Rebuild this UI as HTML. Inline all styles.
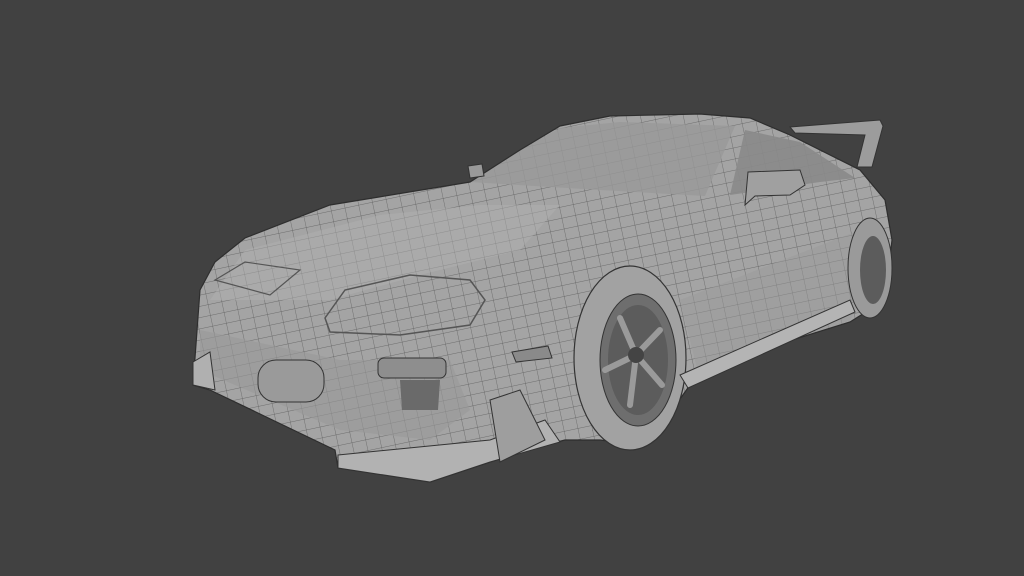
<!DOCTYPE html>
<html><head><style>
html,body{margin:0;padding:0;background:#414141;width:1024px;height:576px;overflow:hidden}
svg{display:block}
</style></head><body>
<svg width="1024" height="576" viewBox="0 0 1024 576" xmlns="http://www.w3.org/2000/svg">
<defs>
<pattern id="g" width="14" height="11" patternUnits="userSpaceOnUse" patternTransform="rotate(-12)">
<path d="M0 0H14M0 0V11" stroke="#5a5a5a" stroke-width="0.7" fill="none"/>
</pattern>
<clipPath id="body"><path d="M193 385 L200 290 L215 262 L245 238 L330 205 L470 182 L520 150 L560 126 L610 116 L700 114 L750 118 L790 135 L860 170 L885 200 L892 240 L885 300 L850 322 L760 350 L690 385 L665 420 L640 445 L600 440 L565 440 L545 445 L490 462 L430 482 L338 468 L335 450 L210 390 Z"/></clipPath>
</defs>
<rect width="1024" height="576" fill="#414141"/>
<path d="M790 127 L880 120 L883 126 L872 167 L857 167 L865 135 L795 133 Z" fill="#9c9c9c" stroke="#333" stroke-width="1"/>
<path d="M193 385 L200 290 L215 262 L245 238 L330 205 L470 182 L520 150 L560 126 L610 116 L700 114 L750 118 L790 135 L860 170 L885 200 L892 240 L885 300 L850 322 L760 350 L690 385 L665 420 L640 445 L600 440 L565 440 L545 445 L490 462 L430 482 L338 468 L335 450 L210 390 Z" fill="#a4a4a4"/>
<g clip-path="url(#body)">
<rect width="1024" height="576" fill="url(#g)"/>
<path d="M470 182 L520 150 L560 128 L620 122 L735 126 L705 196 L600 190 Z" fill="#989898" opacity="0.8"/>
<path d="M730 195 L745 130 L800 142 L855 178 L820 182 Z" fill="#8a8a8a" opacity="0.9"/>
<path d="M210 300 L245 250 L380 215 L480 205 L560 205 L520 250 L420 275 L330 300 Z" fill="#b0b0b0" opacity="0.5"/>
<path d="M200 330 L340 360 L450 360 L470 410 L430 440 L340 430 L200 370 Z" fill="#9a9a9a" opacity="0.6"/>
<path d="M680 300 L860 230 L880 260 L850 320 L700 380 Z" fill="#9a9a9a" opacity="0.5"/>
</g>
<path d="M193 385 L200 290 L215 262 L245 238 L330 205 L470 182 L520 150 L560 126 L610 116 L700 114 L750 118 L790 135 L860 170 L885 200 L892 240 L885 300 L850 322 L760 350 L690 385 L665 420 L640 445 L600 440 L565 440 L545 445 L490 462 L430 482 L338 468 L335 450 L210 390 Z" fill="none" stroke="#2e2e2e" stroke-width="1.2"/>
<path d="M325 318 L345 290 L410 275 L470 280 L485 300 L470 325 L400 335 L330 332 Z" fill="none" stroke="#555" stroke-width="1.5"/>
<path d="M215 280 L245 262 L300 270 L270 295 Z" fill="none" stroke="#555" stroke-width="1.2"/>
<rect x="378" y="358" width="68" height="20" rx="6" fill="#8e8e8e" stroke="#333"/>
<rect x="258" y="360" width="66" height="42" rx="18" fill="#9a9a9a" stroke="#333"/>
<path d="M400 380 L440 380 L438 410 L402 410 Z" fill="#6a6a6a"/>
<path d="M512 352 L548 346 L552 358 L516 362 Z" fill="#8a8a8a" stroke="#333"/>
<path d="M748 172 L800 170 L805 185 L790 195 L755 196 L745 205 Z" fill="#a0a0a0" stroke="#333"/>
<path d="M468 166 L482 164 L484 176 L470 178 Z" fill="#999" stroke="#333"/>
<ellipse cx="630" cy="358" rx="56" ry="92" fill="#a2a2a2" stroke="#333" stroke-width="1.2"/>
<ellipse cx="638" cy="360" rx="38" ry="66" fill="#6e6e6e" stroke="#333"/>
<ellipse cx="638" cy="360" rx="30" ry="55" fill="#5c5c5c"/>
<g stroke="#9a9a9a" stroke-width="6" stroke-linecap="round">
<path d="M636 355 L620 318"/><path d="M636 355 L660 330"/><path d="M636 355 L662 385"/><path d="M636 355 L630 405"/><path d="M636 355 L605 370"/>
</g>
<circle cx="636" cy="355" r="8" fill="#444"/>
<ellipse cx="870" cy="268" rx="22" ry="50" fill="#9a9a9a" stroke="#333"/>
<ellipse cx="873" cy="270" rx="13" ry="34" fill="#5c5c5c"/>
<path d="M680 375 L850 300 L855 312 L688 388 Z" fill="#b4b4b4" stroke="#333"/>
<path d="M338 455 L490 440 L545 420 L560 442 L490 462 L430 482 L338 468 Z" fill="#b2b2b2" stroke="#333"/>
<path d="M193 362 L210 352 L215 390 L193 385 Z" fill="#b0b0b0" stroke="#333"/>
<path d="M490 400 L520 390 L545 440 L500 462 Z" fill="#9e9e9e" stroke="#333"/>
</svg>
</body></html>
